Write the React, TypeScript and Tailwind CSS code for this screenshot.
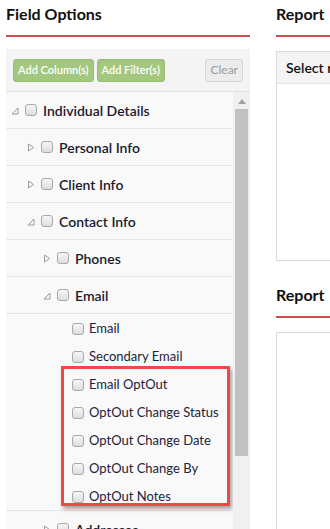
import React from "react";

type Node = {
  label: string;
  level: number;
  kind: "open" | "closed" | "leaf";
};

const branchRows: Node[] = [
  { label: "Individual Details", level: 0, kind: "open" },
  { label: "Personal Info", level: 1, kind: "closed" },
  { label: "Client Info", level: 1, kind: "closed" },
  { label: "Contact Info", level: 1, kind: "open" },
  { label: "Phones", level: 2, kind: "closed" },
  { label: "Email", level: 2, kind: "open" },
];

const plainLeaves = ["Email", "Secondary Email"];
const flaggedLeaves = [
  "Email OptOut",
  "OptOut Change Status",
  "OptOut Change Date",
  "OptOut Change By",
  "OptOut Notes",
];

const Check = () => (
  <span className="inline-block w-[12px] h-[12px] shrink-0 rounded-[3px] border border-[#a8a8a8] bg-gradient-to-b from-[#f6f6f6] to-[#dedede]" />
);

const Toggle = ({ open }: { open: boolean }) =>
  open ? (
    <svg width="8" height="8" viewBox="0 0 8 8" className="shrink-0 mt-[2px]">
      <path d="M7 1 L7 7 L1 7 Z" fill="none" stroke="#9a9a9a" strokeWidth="1" />
    </svg>
  ) : (
    <svg width="8" height="9" viewBox="0 0 8 9" className="shrink-0">
      <path d="M1.5 1 L6.5 4.5 L1.5 8 Z" fill="none" stroke="#9a9a9a" strokeWidth="1" />
    </svg>
  );

const indent = ["pl-[5px]", "pl-[21px]", "pl-[37px]"];

const BranchRow = ({ node }: { node: Node }) => (
  <div
    className={`h-[37px] border-b border-[#e6e6e6] flex items-center gap-[6px] ${indent[node.level]}`}
  >
    <Toggle open={node.kind === "open"} />
    <Check />
    <span className="text-[14px] font-semibold text-[#1a1a2e]">{node.label}</span>
  </div>
);

const LeafRow = ({ label }: { label: string }) => (
  <div className="h-[28px] flex items-center gap-[5px] pl-[66px] pt-[1px]">
    <Check />
    <span className="text-[13px] text-[#22223a]">{label}</span>
  </div>
);

const Heading = ({ children }: { children: React.ReactNode }) => (
  <div>
    <h2 className="pt-[2px] h-[35px] text-[16px] font-bold text-[#111]">{children}</h2>
    <div className="h-[2px] bg-[#c9504f]" />
  </div>
);

export default function App() {
  return (
    <div
      className="w-[330px] h-[529px] overflow-hidden bg-white flex gap-[26px] pl-[6px]"
      style={{ fontFamily: '"Source Sans Pro", Lato, "Noto Sans", sans-serif' }}
    >
      {/* Field options column */}
      <div className="w-[244px] shrink-0 flex flex-col">
        <Heading>Field Options</Heading>
        <div className="mt-[12px] flex-1 bg-[#f4f4f4] flex flex-col">
          <div className="h-[43px] flex items-center px-[7px] border-b border-[#e2e2e2]">
            <div className="flex gap-[3px]">
              <button className="h-[23px] px-[4px] rounded-[3px] bg-[#a3c77e] border border-[#98bd72] text-white text-[11px] font-semibold">
                Add Column(s)
              </button>
              <button className="h-[23px] px-[4px] rounded-[3px] bg-[#a3c77e] border border-[#98bd72] text-white text-[11px] font-semibold">
                Add Filter(s)
              </button>
            </div>
            <button className="ml-auto h-[23px] px-[4px] rounded-[3px] bg-[#ececec] border border-[#d4d4d4] text-[#9a9a9a] text-[12px]">
              Clear
            </button>
          </div>
          <div className="flex-1 flex overflow-hidden">
            <div className="flex-1 bg-[#f9f9f9] overflow-hidden">
              {branchRows.map((n) => (
                <BranchRow key={n.label + n.level} node={n} />
              ))}
              {plainLeaves.map((l) => (
                <LeafRow key={l} label={l} />
              ))}
              <div className="relative">
                {flaggedLeaves.map((l) => (
                  <LeafRow key={l} label={l} />
                ))}
                <div className="absolute left-[55px] w-[169px] top-[-4px] bottom-[4px] border-[3px] border-[#f04848] shadow-[2px_3px_4px_rgba(0,0,0,0.35)]" />
              </div>
              <div className="border-t border-[#e6e6e6]">
                <BranchRow node={{ label: "Addresses", level: 2, kind: "closed" }} />
              </div>
            </div>
            <div className="w-[17px] bg-[#f0f0f0] flex flex-col items-center pt-[7px]">
              <svg width="8" height="5" viewBox="0 0 8 5">
                <path d="M0 5 L4 0 L8 5 Z" fill="#a3a3a3" />
              </svg>
              <div className="mt-[5px] w-[13px] h-[347px] bg-[#c1c1c1]" />
            </div>
          </div>
        </div>
      </div>

      {/* Report column */}
      <div className="flex-1 flex flex-col min-w-[120px]">
        <Heading>Report</Heading>
        <div className="mt-[14px] h-[210px] border border-[#dcdcdc]">
          <div className="h-[32px] bg-[#f4f4f4] border-b border-[#e2e2e2] flex items-center px-[9px] text-[14px] font-semibold text-[#111] whitespace-nowrap">
            Select report columns
          </div>
        </div>
        <div className="mt-[20px]">
          <Heading>Report</Heading>
        </div>
        <div className="mt-[14px] flex-1 border border-[#dcdcdc] border-b-0" />
      </div>
    </div>
  );
}
